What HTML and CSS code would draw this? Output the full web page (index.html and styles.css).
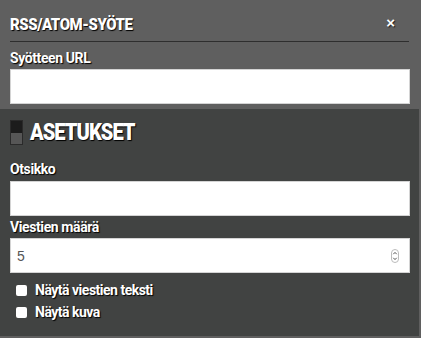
FILE: index.html
```html
<!DOCTYPE html>
<html lang="fi">
<head>
<meta charset="utf-8">
<title>RSS/ATOM-syöte</title>
<link rel="stylesheet" href="styles.css">
</head>
<body>
<div class="dialog">
  <div class="header">
    <h1 class="title">RSS/ATOM-SYÖTE</h1>
    <span class="close">×</span>
  </div>
  <div class="top">
    <label class="label">Syötteen URL</label>
    <input class="field" type="text">
  </div>
  <div class="panel">
    <div class="heading">
      <span class="hicon"><span class="hicon-top"></span><span class="hicon-bottom"></span></span>
      <h2 class="heading-text">ASETUKSET</h2>
    </div>
    <label class="label label-first">Otsikko</label>
    <input class="field" type="text">
    <label class="label">Viestien määrä</label>
    <div class="numwrap">
      <span class="numval">5</span>
      <span class="spin"><svg width="8" height="14" viewBox="0 0 8 14"><rect x="0.5" y="0.5" width="7" height="13" rx="3.5" fill="#fff" stroke="#bbb"/><path d="M2.3 5.2 L4 3.4 L5.7 5.2" fill="none" stroke="#555" stroke-width="1"/><path d="M2.3 8.8 L4 10.6 L5.7 8.8" fill="none" stroke="#555" stroke-width="1"/></svg></span>
    </div>
    <div class="check"><span class="box"></span><span class="check-text">Näytä viestien teksti</span></div>
    <div class="check"><span class="box"></span><span class="check-text">Näytä kuva</span></div>
  </div>
</div>
</body>
</html>
```
FILE: styles.css
```css
html, body {
  margin: 0;
  padding: 0;
  background: #5f5f5f;
}
.dialog {
  width: 421px;
  height: 338px;
  box-sizing: border-box;
  background: #5f5f5f;
  padding: 0 2px 2px 0;
  display: flex;
  flex-direction: column;
  font-family: Roboto, "Liberation Sans", sans-serif;
  color: #fff;
}
.header {
  margin: 0 10px 0 10px;
  height: 42px;
  border-bottom: 1px solid #2e2e2e;
  display: flex;
  align-items: center;
  justify-content: space-between;
  box-sizing: border-box;
}
.title {
  margin: 0;
  font-size: 17px;
  font-weight: 900;
  letter-spacing: -0.5px;
  text-shadow: 1px 1px 1px #000;
  position: relative;
  top: 3px;
  transform: scaleX(0.88);
  transform-origin: left center;
}
.close {
  font-family: "Liberation Sans", sans-serif;
  font-size: 15px;
  font-weight: bold;
  margin-right: 14px;
  text-shadow: 1px 1px 1px #222;
  position: relative;
  top: 2px;
}
.top {
  padding: 7px 10px 5px 10px;
  display: flex;
  flex-direction: column;
}
.label {
  font-size: 14px;
  font-weight: bold;
  line-height: 18px;
  text-shadow: 1px 1px 1px #000;
  letter-spacing: -0.4px;
}
.field {
  display: block;
  box-sizing: border-box;
  width: 400px;
  height: 35px;
  margin: 0;
  border: 1px solid #d4d4d4;
  background: #fff;
  outline: none;
}
.top .field {
  margin-top: 2px;
}
.panel {
  flex: 1;
  background: #414342;
  padding: 11px 10px 0 10px;
  display: flex;
  flex-direction: column;
}
.heading {
  display: flex;
  align-items: center;
  gap: 7px;
  height: 25px;
}
.hicon {
  display: flex;
  flex-direction: column;
  width: 13px;
  height: 25px;
  box-sizing: border-box;
  border: 1px solid #2a2a2a;
}
.hicon-top {
  flex: 1;
  background: #1c1c1c;
}
.hicon-bottom {
  flex: 1;
  background: #565656;
}
.heading-text {
  margin: 0;
  font-size: 24px;
  font-weight: 900;
  letter-spacing: -1.2px;
  text-shadow: 1px 1px 1px #000;
  line-height: 25px;
  transform: scaleX(0.84);
  transform-origin: left center;
}
.label-first {
  margin-top: 15px;
}
.panel .field {
  margin-top: 3px;
  margin-bottom: 2px;
}
.numwrap {
  box-sizing: border-box;
  width: 400px;
  height: 35px;
  margin-top: 2px;
  border: 1px solid #d4d4d4;
  background: #fff;
  display: flex;
  align-items: center;
  justify-content: space-between;
  padding: 0 10px 0 6px;
}
.numval {
  font-family: "Liberation Sans", sans-serif;
  font-size: 14px;
  color: #555;
}
.spin {
  display: flex;
}
.check {
  display: flex;
  align-items: center;
  margin-left: 6px;
  height: 22px;
}
.numwrap + .check {
  margin-top: 6px;
}
.box {
  width: 11px;
  height: 11px;
  background: #fff;
  border-radius: 2px;
  margin-right: 8px;
}
.check-text {
  font-size: 14px;
  font-weight: bold;
  text-shadow: 1px 1px 1px #000;
  letter-spacing: -0.5px;
}
```
